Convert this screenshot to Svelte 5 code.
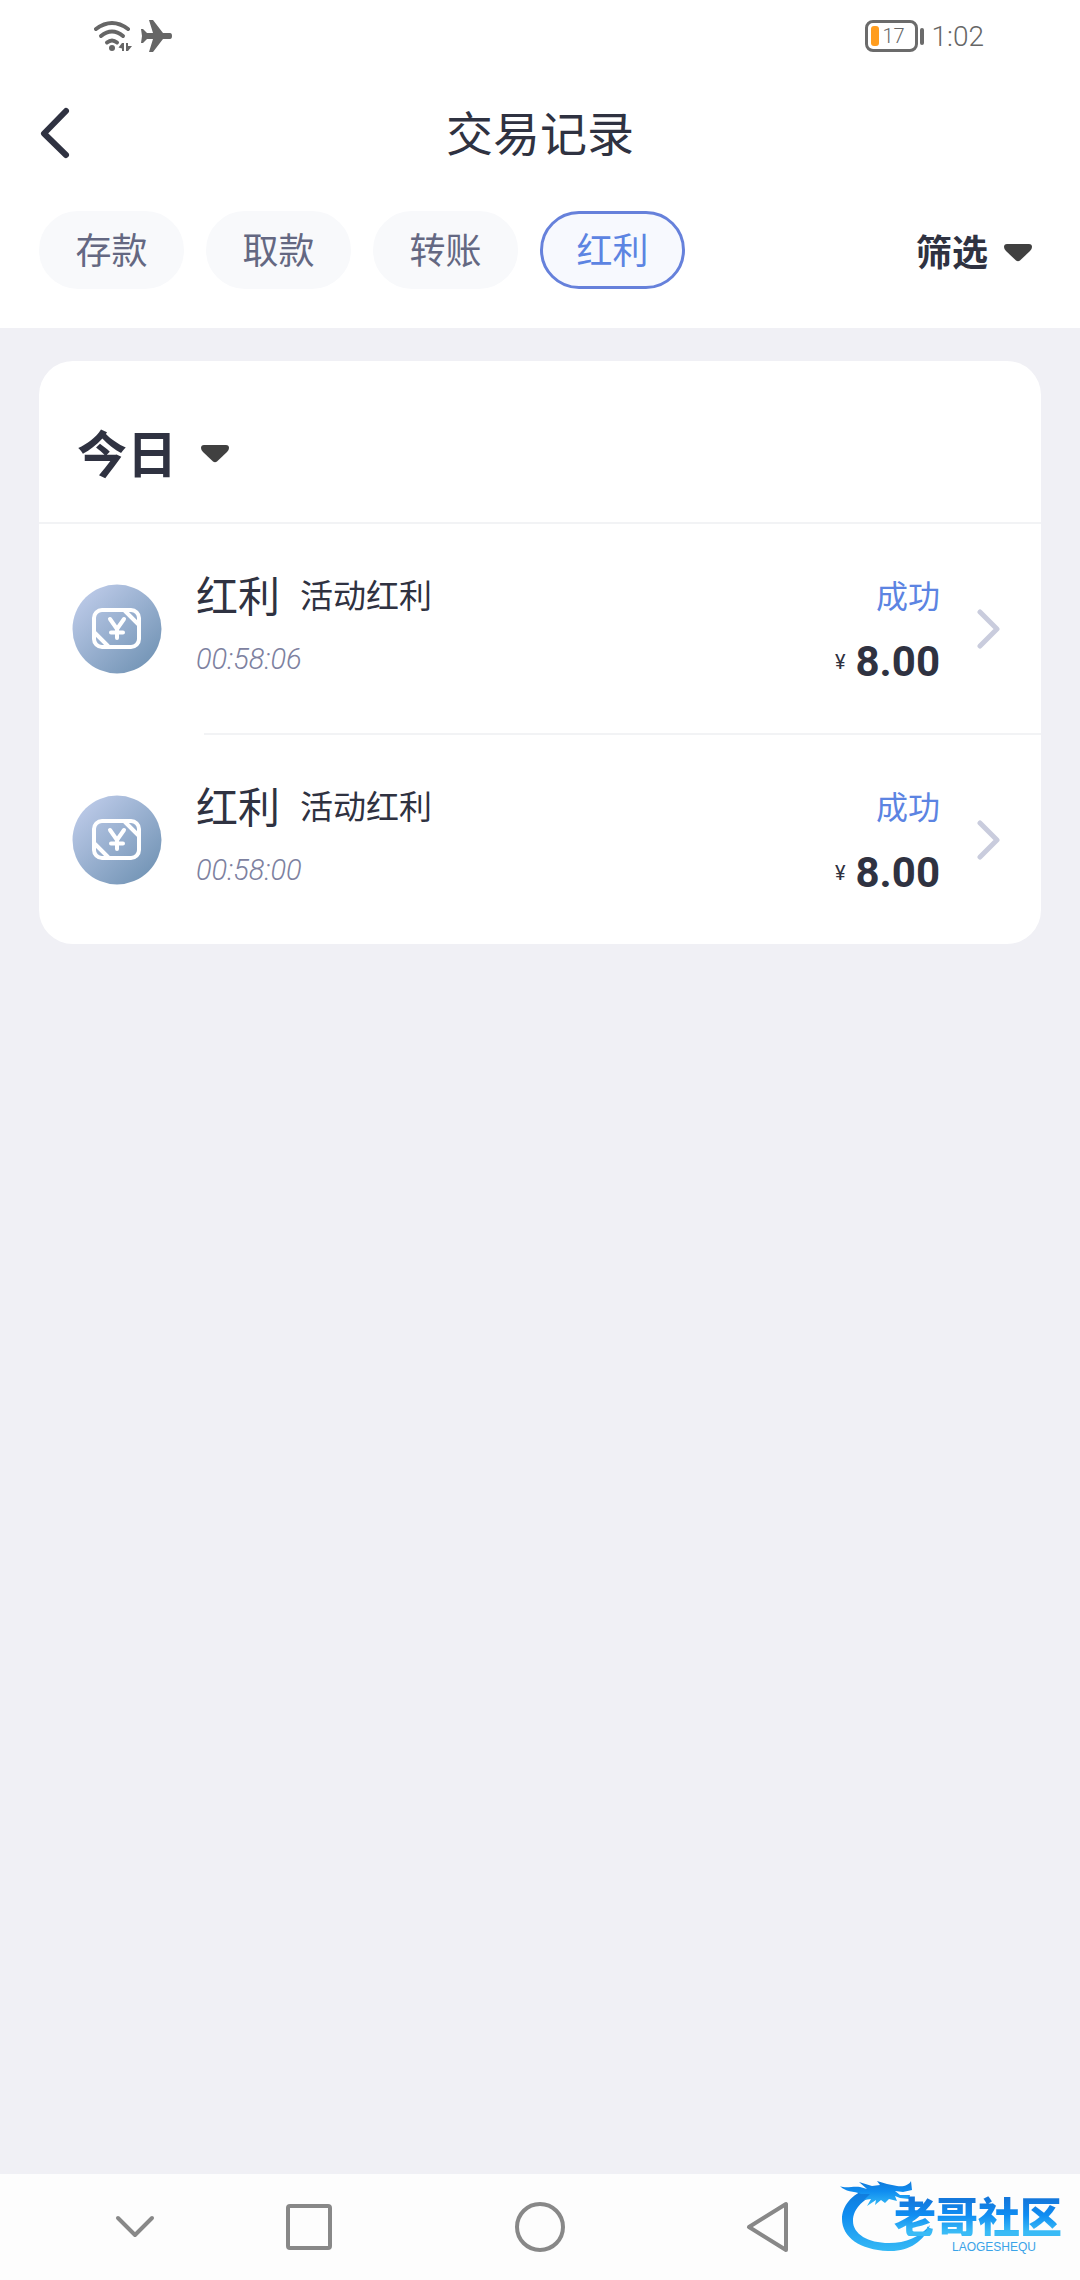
<script lang="ts">
	type RecordItem = {
		type: string;
		detail: string;
		time: string;
		status: string;
		amount: string;
	};

	const tabs = ['存款', '取款', '转账', '红利'];

	const records: RecordItem[] = [
		{ type: '红利', detail: '活动红利', time: '00:58:06', status: '成功', amount: '8.00' },
		{ type: '红利', detail: '活动红利', time: '00:58:00', status: '成功', amount: '8.00' }
	];

	let activeTab = $state('红利');
</script>

{#snippet caret()}
	<svg class="caret" width="28" height="18" viewBox="0 0 28 18" aria-hidden="true">
		<path d="M3 0H25Q28 0 28 3Q28 5 26 7L16 16.500Q14 18 12 16.500L2 7Q0 5 0 3Q0 0 3 0Z" fill="#404040" />
	</svg>
{/snippet}

<div class="screen">
	<div class="status-bar">
		<div class="status-group">
			<svg width="38" height="32" viewBox="0 0 38 32" aria-hidden="true">
				<g fill="none" stroke="#666" stroke-width="4" stroke-linecap="round">
					<path d="M2 9Q18 -3 34 9" />
					<path d="M7 16Q18 7 29 16" />
					<path d="M13 22.500Q18 18.500 23 22.500" />
				</g>
				<circle cx="18" cy="28" r="3" fill="#666" />
				<path d="M30 23V31H28V28.500L24.500 27.500L28 23ZM32 23H34V26H38L34 31H32Z" fill="#666" />
			</svg>
			<svg width="34" height="34" viewBox="0 0 34 34" aria-hidden="true">
				<path
					d="M9 1H13L23 14H30Q32 14 32 17Q32 20 30 20H23L13 33H9L13 20H7L3 24H1L2 17L1 10H3L7 14H13Z"
					fill="#666"
				/>
			</svg>
		</div>
		<div class="status-group">
			<div class="battery">
				<span class="battery-body"><span class="battery-level"></span>17</span>
				<span class="battery-cap"></span>
			</div>
			<span class="clock">1:02</span>
		</div>
	</div>

	<header class="title-bar">
		<button class="back" aria-label="返回">
			<svg width="30" height="52" viewBox="0 0 30 52" aria-hidden="true">
				<path d="M26 4L4 26.500L26 48" fill="none" stroke="#2f3241" stroke-width="6" stroke-linecap="round" stroke-linejoin="round" />
			</svg>
		</button>
		<h1>交易记录</h1>
	</header>

	<nav class="tabs">
		{#each tabs as tab}
			<button class="tab" class:selected={activeTab === tab} onclick={() => (activeTab = tab)}>{tab}</button>
		{/each}
		<button class="filter">筛选{@render caret()}</button>
	</nav>

	<main>
		<section class="card">
			<button class="day">今日{@render caret()}</button>
			<ul>
				{#each records as record}
					<li>
						<a class="record" href="#detail">
							<svg class="record-icon" width="90" height="90" viewBox="0 0 90 90" aria-hidden="true">
								<defs>
									<linearGradient id="coin" x1="0.1" y1="0.1" x2="0.85" y2="0.9">
										<stop offset="0" stop-color="#bccae8" />
										<stop offset="1" stop-color="#7596b7" />
									</linearGradient>
								</defs>
								<circle cx="45" cy="45" r="44.500" fill="url(#coin)" />
								<g fill="none" stroke="#fff" stroke-width="4" stroke-linecap="round" stroke-linejoin="round">
									<rect x="22" y="26" width="45" height="37" rx="8" />
									<path d="M53 27L66 40M23 49L36 62" />
									<path d="M38 35L45 45L52 35M45 45V54M39 48.500H51" />
								</g>
							</svg>
							<div class="info">
								<div class="name">{record.type}<span class="detail">{record.detail}</span></div>
								<time>{record.time}</time>
							</div>
							<div class="result">
								<div class="state">{record.status}</div>
								<div class="amount"><span class="currency">¥</span>{record.amount}</div>
							</div>
							<svg width="24" height="40" viewBox="0 0 24 40" aria-hidden="true">
								<path d="M3 3L20 20L3 37" fill="none" stroke="#c9ccdd" stroke-width="5" stroke-linecap="round" stroke-linejoin="round" />
							</svg>
						</a>
					</li>
				{/each}
			</ul>
		</section>
	</main>

	<footer class="nav-bar">
		<button aria-label="收起">
			<svg width="40" height="24" viewBox="0 0 40 24">
				<path d="M3 3L20 20L37 3" />
			</svg>
		</button>
		<button aria-label="最近任务">
			<svg width="48" height="48" viewBox="0 0 48 48">
				<rect x="3" y="3" width="42" height="42" rx="2" />
			</svg>
		</button>
		<button aria-label="主页">
			<svg width="52" height="52" viewBox="0 0 52 52">
				<circle cx="26" cy="26" r="23" />
			</svg>
		</button>
		<button aria-label="返回上一页">
			<svg width="46" height="52" viewBox="0 0 46 52">
				<path d="M4 26L41 3V49Z" />
			</svg>
		</button>
		<div class="logo">
			<svg width="96" height="78" viewBox="0 0 96 78" aria-hidden="true">
				<defs>
					<linearGradient id="dragon" x1="0" y1="0" x2="0" y2="1">
						<stop offset="0" stop-color="#1279d8" />
						<stop offset="0.4" stop-color="#0f8cf0" />
						<stop offset="1" stop-color="#35b9f5" />
					</linearGradient>
				</defs>
				<g fill="url(#dragon)">
					<path d="M90 49C84 66 68 76 48 75C20 74 2 61 2 43C2 30 12 18 27 13L42 15C24 22 13 32 13 45C13 58 28 67 49 67C66 67 80 61 90 49Z" />
					<path d="M0 10C6 13 12 10 20 11L27 13L19 6L32 10L40 9L37 5L47 8L57 10C64 11 69 9 71 5L72 14L63 16L55 15L60 19L70 19L69 23L60 22L55 20L57 25L49 23L45 27L41 24L35 29L36 24L27 30L31 23L24 24L30 18L21 18C14 15 5 16 0 10Z" />
				</g>
			</svg>
			<div class="logo-text">
				<span class="logo-name">老哥社区</span>
				<span class="logo-latin">LAOGESHEQU</span>
			</div>
		</div>
	</footer>
</div>

<style>
	:global(body) {
		margin: 0;
		background: #f0f0f5;
	}

	.screen {
		min-height: 100vh;
		display: flex;
		flex-direction: column;
		background: #f0f0f5;
		color: #2f3241;
		font-family: 'Noto Sans CJK SC', sans-serif;
	}

	button {
		border: none;
		background: none;
		padding: 0;
		color: inherit;
		font-family: inherit;
		cursor: pointer;
	}

	svg {
		display: block;
		flex: none;
	}

	.status-bar,
	.title-bar,
	.tabs {
		background: #fff;
	}

	.status-bar {
		display: flex;
		justify-content: space-between;
		align-items: center;
		height: 72px;
		padding: 0 96px 0 94px;
		color: #666;
		font-family: Roboto, sans-serif;
		font-weight: 300;
	}

	.status-group {
		display: flex;
		align-items: center;
		gap: 8px;
	}

	.battery {
		display: flex;
		align-items: center;
		gap: 2px;
	}

	.battery-body {
		display: flex;
		align-items: center;
		gap: 4px;
		box-sizing: border-box;
		width: 53px;
		height: 32px;
		padding-left: 3px;
		border: 3px solid #6b6b6b;
		border-radius: 8px;
		font-size: 20px;
	}

	.battery-level {
		width: 8px;
		height: 20px;
		border-radius: 3px;
		background: #ff9d1e;
	}

	.battery-cap {
		width: 4px;
		height: 17px;
		border-radius: 2px;
		background: #6b6b6b;
	}

	.clock {
		font-size: 28px;
	}

	.title-bar {
		display: grid;
		grid-template-columns: 1fr auto 1fr;
		align-items: center;
		height: 122px;
		padding: 0 40px;
	}

	.back {
		justify-self: start;
	}

	h1 {
		margin: 0;
		padding-bottom: 4px;
		font-size: 47px;
		font-weight: 400;
		line-height: 60px;
	}

	.tabs {
		display: flex;
		align-items: center;
		gap: 22px;
		padding: 17px 48px 39px 39px;
	}

	.tab {
		box-sizing: border-box;
		width: 145px;
		height: 78px;
		padding-bottom: 4px;
		border: 3px solid #f8f9fb;
		border-radius: 39px;
		background: #f8f9fb;
		color: #646882;
		font-size: 36px;
	}

	.tab.selected {
		border-color: #6681db;
		background: #f7f9fe;
		color: #5c84e2;
	}

	.filter {
		display: flex;
		align-items: center;
		gap: 16px;
		margin-left: auto;
		font-size: 36px;
		font-weight: 700;
	}

	.caret {
		margin-top: 6px;
	}

	main {
		flex: 1;
		padding: 33px 39px;
	}

	.card {
		border-radius: 34px;
		background: #fff;
		overflow: hidden;
	}

	.day {
		display: flex;
		align-items: center;
		gap: 24px;
		box-sizing: border-box;
		width: 100%;
		height: 163px;
		padding: 18px 38px 0;
		border-bottom: 2px solid #f2f3f5;
		font-size: 50px;
		font-weight: 700;
	}

	ul {
		margin: 0;
		padding: 0;
		list-style: none;
	}

	li + li::before {
		content: '';
		display: block;
		height: 2px;
		margin-left: 165px;
		background: #f2f3f5;
	}

	.record {
		display: flex;
		align-items: center;
		height: 209px;
		padding: 0 40px 0 33px;
		color: inherit;
		text-decoration: none;
	}

	.info {
		flex: 1;
		margin-left: 34px;
	}

	.name {
		display: flex;
		align-items: center;
		gap: 20px;
		font-size: 42px;
		line-height: 60px;
	}

	.detail {
		font-size: 33px;
	}

	time {
		display: block;
		color: #7d81a0;
		font-family: Roboto, sans-serif;
		font-size: 29px;
		font-style: italic;
		font-weight: 300;
		line-height: 70px;
	}

	.result {
		margin-right: 37px;
		text-align: right;
	}

	.state {
		color: #5c84e2;
		font-size: 32px;
		line-height: 66px;
	}

	.amount {
		display: flex;
		align-items: center;
		justify-content: flex-end;
		gap: 10px;
		font-family: Roboto, sans-serif;
		font-size: 42px;
		font-weight: 700;
		line-height: 70px;
	}

	.currency {
		font-size: 20px;
		font-weight: 400;
	}

	.nav-bar {
		position: relative;
		display: grid;
		grid-template-columns: 174fr 174fr 288fr 168fr 228fr;
		height: 106px;
		padding-left: 48px;
		background: #fdfdfd;
	}

	.nav-bar button {
		display: flex;
		align-items: center;
		justify-content: center;
	}

	.nav-bar button svg {
		fill: none;
		stroke: #888;
		stroke-width: 4;
		stroke-linecap: round;
		stroke-linejoin: round;
	}

	.logo {
		position: absolute;
		top: 2px;
		right: 18px;
		display: flex;
	}

	.logo-text {
		display: flex;
		flex-direction: column;
		align-items: flex-end;
		margin: 18px 0 0 -42px;
	}

	.logo-name {
		background: linear-gradient(#1478dc 15%, #0f8df2 50%, #3abbf6 90%);
		background-clip: text;
		color: transparent;
		font-size: 42px;
		font-weight: 900;
		line-height: 42px;
	}

	.logo-latin {
		margin-right: 26px;
		color: #3aa3e8;
		font-family: 'Liberation Sans', sans-serif;
		font-size: 12px;
		line-height: 22px;
	}
</style>
